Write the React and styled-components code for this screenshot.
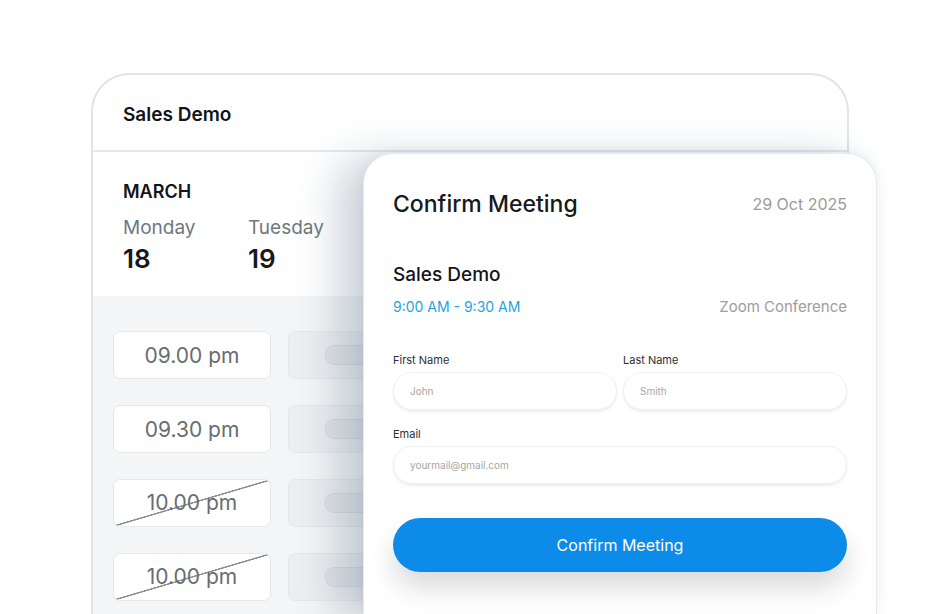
import styled, { createGlobalStyle, css } from 'styled-components';

const GlobalStyle = createGlobalStyle`
  html, body {
    margin: 0;
    padding: 0;
    background: #ffffff;
    font-family: Inter, "Liberation Sans", sans-serif;
    -webkit-font-smoothing: antialiased;
  }
  body {
    width: 938px;
    height: 614px;
    overflow: hidden;
  }
`;

const slots = [
  { id: 1, time: '09.00 pm', taken: false },
  { id: 2, time: '09.30 pm', taken: false },
  { id: 3, time: '10.00 pm', taken: true },
  { id: 4, time: '10.00 pm', taken: true },
];

const days = [
  { name: 'Monday', date: 18 },
  { name: 'Tuesday', date: 19 },
];

const App = () => {
  return (
    <>
      <GlobalStyle />
      <Stage>
        <CalendarCard>
          <CalendarHeader>Sales Demo</CalendarHeader>
          <DateSection>
            <Month>MARCH</Month>
            <DayRow>
              {days.map((day) => (
                <Day key={day.date}>
                  <DayName>{day.name}</DayName>
                  <DayDate>{day.date}</DayDate>
                </Day>
              ))}
            </DayRow>
          </DateSection>
          <SlotArea>
            {slots.map((slot) => (
              <SlotRow key={slot.id}>
                <TimeSlot $taken={slot.taken}>{slot.time}</TimeSlot>
                <GhostSlot>
                  <GhostPill />
                </GhostSlot>
              </SlotRow>
            ))}
          </SlotArea>
        </CalendarCard>

        <ConfirmCard>
          <TitleRow>
            <Title>Confirm Meeting</Title>
            <DateText>29 Oct 2025</DateText>
          </TitleRow>
          <MeetingName>Sales Demo</MeetingName>
          <InfoRow>
            <TimeRange>9:00 AM - 9:30 AM</TimeRange>
            <Location>Zoom Conference</Location>
          </InfoRow>

          <FieldGrid>
            <Field>
              <Label>First Name</Label>
              <Input placeholder='John' />
            </Field>
            <Field>
              <Label>Last Name</Label>
              <Input placeholder='Smith' />
            </Field>
          </FieldGrid>
          <EmailField>
            <Label>Email</Label>
            <Input placeholder='yourmail@gmail.com' />
          </EmailField>

          <ConfirmButton type='button'>Confirm Meeting</ConfirmButton>
        </ConfirmCard>
      </Stage>
    </>
  );
};

const Stage = styled.div`
  position: relative;
  width: 938px;
  height: 614px;
  padding: 73px 0 0 91px;
  box-sizing: border-box;
  overflow: hidden;
`;

const CalendarCard = styled.section`
  width: 758px;
  height: 541px;
  box-sizing: border-box;
  display: flex;
  flex-direction: column;
  background: #ffffff;
  border: 2px solid #e1e3e5;
  border-bottom: none;
  border-radius: 38px 38px 0 0;
  overflow: hidden;
`;

const CalendarHeader = styled.header`
  height: 77px;
  flex-shrink: 0;
  box-sizing: border-box;
  display: flex;
  align-items: center;
  padding: 4px 0 0 30px;
  border-bottom: 2px solid #e7e9eb;
  font-size: 19px;
  font-weight: 600;
  color: #111418;
`;

const DateSection = styled.div`
  height: 144px;
  flex-shrink: 0;
  box-sizing: border-box;
  padding: 28px 30px 0;
`;

const Month = styled.div`
  font-size: 18px;
  line-height: 24px;
  font-weight: 600;
  color: #111418;
`;

const DayRow = styled.div`
  display: flex;
  margin-top: 12px;
`;

const Day = styled.div`
  width: 125px;
  display: flex;
  flex-direction: column;
  gap: 3px;
`;

const DayName = styled.span`
  font-size: 19px;
  line-height: 24px;
  color: #6d7880;
`;

const DayDate = styled.span`
  font-size: 26px;
  line-height: 32px;
  font-weight: 600;
  color: #15181c;
`;

const SlotArea = styled.div`
  flex: 1;
  background: #f3f5f6;
  padding: 35px 20px 0;
  display: flex;
  flex-direction: column;
  gap: 26px;
`;

const SlotRow = styled.div`
  display: flex;
  gap: 17px;
`;

const TimeSlot = styled.div`
  width: 158px;
  height: 48px;
  flex-shrink: 0;
  box-sizing: border-box;
  display: flex;
  align-items: center;
  justify-content: center;
  background: #ffffff;
  border: 1.5px solid #e5e7e9;
  border-radius: 7px;
  font-size: 21px;
  color: #686d72;
  ${({ $taken }) =>
    $taken &&
    css`
      background: linear-gradient(
          to bottom right,
          transparent calc(50% - 1px),
          #8d8f91 calc(50% - 0.5px),
          #8d8f91 calc(50% + 0.5px),
          transparent calc(50% + 1px)
        ),
        #ffffff;
      padding-bottom: 2px;
    `}
`;

const GhostSlot = styled.div`
  width: 158px;
  height: 48px;
  flex-shrink: 0;
  box-sizing: border-box;
  display: flex;
  align-items: center;
  padding-left: 36px;
  background: #eceef0;
  border: 1px solid #e5e7e9;
  border-radius: 7px;
`;

const GhostPill = styled.div`
  flex: 1;
  height: 18px;
  background: #e2e5e8;
  border: 1px solid #d8dbde;
  border-right: none;
  border-radius: 9px 0 0 9px;
`;

const ConfirmCard = styled.section`
  position: absolute;
  left: 363px;
  top: 153px;
  width: 514px;
  height: 461px;
  box-sizing: border-box;
  padding: 34px 29px 0 29px;
  background: #ffffff;
  border: 1px solid #e8e9eb;
  border-bottom: none;
  border-radius: 30px 30px 0 0;
  box-shadow: -26px 4px 40px rgba(80, 100, 125, 0.28),
    0 -2px 10px rgba(120, 150, 200, 0.12);
`;

const TitleRow = styled.div`
  display: flex;
  justify-content: space-between;
  align-items: center;
  height: 32px;
`;

const Title = styled.h2`
  margin: 0;
  font-size: 23px;
  font-weight: 500;
  color: #16191d;
`;

const DateText = styled.span`
  font-size: 16px;
  color: #9b9b9b;
`;

const MeetingName = styled.div`
  margin-top: 43px;
  font-size: 19px;
  line-height: 24px;
  font-weight: 500;
  color: #111418;
`;

const InfoRow = styled.div`
  margin-top: 9px;
  display: flex;
  justify-content: space-between;
  align-items: center;
  height: 20px;
`;

const TimeRange = styled.span`
  font-size: 14px;
  color: #1fa4e2;
`;

const Location = styled.span`
  font-size: 15px;
  color: #9d9d9d;
`;

const FieldGrid = styled.div`
  margin-top: 37px;
  display: grid;
  grid-template-columns: 1fr 1fr;
  gap: 6px;
`;

const Field = styled.label`
  display: flex;
  flex-direction: column;
  gap: 5px;
`;

const EmailField = styled(Field)`
  margin-top: 17px;
`;

const Label = styled.span`
  font-size: 11px;
  line-height: 14px;
  color: #2c2f33;
`;

const Input = styled.input`
  height: 38px;
  box-sizing: border-box;
  border: 1px solid #f1f1f2;
  border-radius: 19px;
  padding: 0 16px;
  background: #ffffff;
  box-shadow: 0 2px 3px rgba(0, 0, 0, 0.07);
  font-family: inherit;
  font-size: 10px;
  outline: none;
  &::placeholder {
    color: #a6a6a6;
  }
`;

const ConfirmButton = styled.button`
  margin-top: 34px;
  width: 100%;
  height: 54px;
  border: none;
  border-radius: 27px;
  background: #0d8be8;
  color: #ffffff;
  font-family: inherit;
  font-size: 16px;
  font-weight: 400;
  box-shadow: 0 16px 28px rgba(0, 0, 0, 0.15);
  cursor: pointer;
`;

export default App;
